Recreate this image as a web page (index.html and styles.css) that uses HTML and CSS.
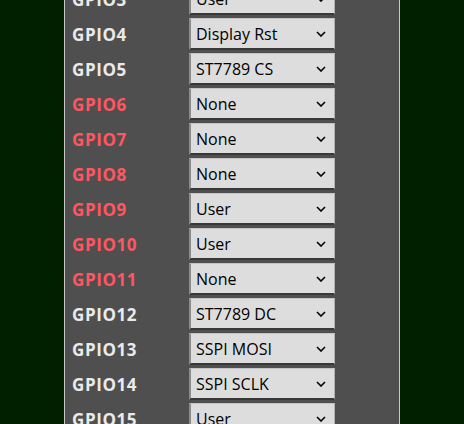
FILE: index.html
```html
<!DOCTYPE html>
<html lang="en">
  <head>
    <meta charset="UTF-8" />
    <meta name="viewport" content="width=device-width, initial-scale=1.0" />
    <title>Configure Module</title>
    <link rel="stylesheet" href="styles.css">
  </head>
  <body>
    <div class="panel">
      <div class="gpio-list">
        <div class="gpio-label">GPIO3</div>
        <div class="sel"><span>User</span><svg width="10" height="6" viewBox="0 0 10 6"><path d="M1 1L5 5L9 1" /></svg></div>

        <div class="gpio-label">GPIO4</div>
        <div class="sel"><span>Display Rst</span><svg width="10" height="6" viewBox="0 0 10 6"><path d="M1 1L5 5L9 1" /></svg></div>

        <div class="gpio-label">GPIO5</div>
        <div class="sel"><span>ST7789 CS</span><svg width="10" height="6" viewBox="0 0 10 6"><path d="M1 1L5 5L9 1" /></svg></div>

        <div class="gpio-label warn">GPIO6</div>
        <div class="sel"><span>None</span><svg width="10" height="6" viewBox="0 0 10 6"><path d="M1 1L5 5L9 1" /></svg></div>

        <div class="gpio-label warn">GPIO7</div>
        <div class="sel"><span>None</span><svg width="10" height="6" viewBox="0 0 10 6"><path d="M1 1L5 5L9 1" /></svg></div>

        <div class="gpio-label warn">GPIO8</div>
        <div class="sel"><span>None</span><svg width="10" height="6" viewBox="0 0 10 6"><path d="M1 1L5 5L9 1" /></svg></div>

        <div class="gpio-label warn">GPIO9</div>
        <div class="sel"><span>User</span><svg width="10" height="6" viewBox="0 0 10 6"><path d="M1 1L5 5L9 1" /></svg></div>

        <div class="gpio-label warn">GPIO10</div>
        <div class="sel"><span>User</span><svg width="10" height="6" viewBox="0 0 10 6"><path d="M1 1L5 5L9 1" /></svg></div>

        <div class="gpio-label warn">GPIO11</div>
        <div class="sel"><span>None</span><svg width="10" height="6" viewBox="0 0 10 6"><path d="M1 1L5 5L9 1" /></svg></div>

        <div class="gpio-label">GPIO12</div>
        <div class="sel"><span>ST7789 DC</span><svg width="10" height="6" viewBox="0 0 10 6"><path d="M1 1L5 5L9 1" /></svg></div>

        <div class="gpio-label">GPIO13</div>
        <div class="sel"><span>SSPI MOSI</span><svg width="10" height="6" viewBox="0 0 10 6"><path d="M1 1L5 5L9 1" /></svg></div>

        <div class="gpio-label">GPIO14</div>
        <div class="sel"><span>SSPI SCLK</span><svg width="10" height="6" viewBox="0 0 10 6"><path d="M1 1L5 5L9 1" /></svg></div>

        <div class="gpio-label">GPIO15</div>
        <div class="sel"><span>User</span><svg width="10" height="6" viewBox="0 0 10 6"><path d="M1 1L5 5L9 1" /></svg></div>
      </div>
    </div>
  </body>
</html>
```

FILE: styles.css
```css
body {
  margin: 0;
  padding: 0;
  background-color: #002000;
  font-family: "Open Sans", "DejaVu Sans", sans-serif;
  overflow: hidden;
}
.panel {
  margin-left: 64px;
  width: 334px;
  background-color: #4f4f4f;
  border-left: 1px solid #c8c8c8;
  border-right: 1px solid #c8c8c8;
  margin-top: -17px;
  padding-bottom: 20px;
}
.gpio-list {
  display: grid;
  grid-template-columns: 117px 146px;
  grid-auto-rows: 32px;
  row-gap: 3px;
  align-items: center;
  padding-left: 7px;
}
.gpio-label {
  font-size: 17px;
  font-weight: bold;
  letter-spacing: 0.6px;
  color: #eaeaea;
}
.gpio-label.warn {
  color: #ff5661;
}
.sel {
  box-sizing: border-box;
  height: 32px;
  display: flex;
  align-items: center;
  justify-content: space-between;
  padding: 0 8px 0 5px;
  background-color: #dddddd;
  color: #000;
  font-size: 16px;
  border-style: solid;
  border-width: 1px 1px 2px 2px;
  border-color: #c4c4c4 #b0b0b0 #383838 #8c8c8c;
}
.sel svg path {
  fill: none;
  stroke: #000;
  stroke-width: 1.6;
}
```
